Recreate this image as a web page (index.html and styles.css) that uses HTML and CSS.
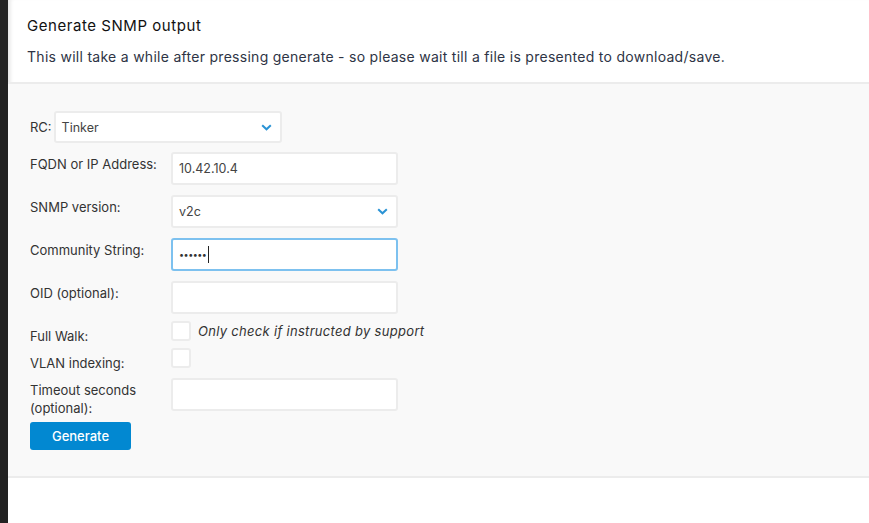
FILE: index.html
```html
<!DOCTYPE html>
<html>
<head>
<meta charset="utf-8">
<link rel="stylesheet" href="styles.css">
</head>
<body>
<div class="app">
  <div class="sidebar"></div>
  <div class="main">
    <div class="header">
      <h1 class="title">Generate SNMP output</h1>
      <p class="subtitle">This will take a while after pressing generate - so please wait till a file is presented to download/save.</p>
    </div>
    <form class="form">
      <div class="rc-row">
        <label class="rc-label">RC:</label>
        <div class="select rc-select"><span>Tinker</span>
          <svg class="chev" width="11" height="7" viewBox="0 0 11 7"><path d="M1.2 1.2 L5.5 5.3 L9.8 1.2" fill="none" stroke="#2a93d5" stroke-width="2"/></svg>
        </div>
      </div>
      <div class="grid">
        <label class="lbl">FQDN or IP Address:</label>
        <div class="input"><span>10.42.10.4</span></div>

        <label class="lbl">SNMP version:</label>
        <div class="select"><span>v2c</span>
          <svg class="chev" width="11" height="7" viewBox="0 0 11 7"><path d="M1.2 1.2 L5.5 5.3 L9.8 1.2" fill="none" stroke="#2a93d5" stroke-width="2"/></svg>
        </div>

        <label class="lbl">Community String:</label>
        <div class="input focus"><span class="dots">••••••</span><span class="caret"></span></div>

        <label class="lbl">OID (optional):</label>
        <div class="input before-check"></div>

        <label class="lbl lbl-check">Full Walk:</label>
        <div class="check-line"><span class="checkbox"></span><em class="hint">Only check if instructed by support</em></div>

        <label class="lbl lbl-check">VLAN indexing:</label>
        <div class="check-line last-check"><span class="checkbox"></span></div>

        <label class="lbl">Timeout seconds (optional):</label>
        <div class="input last"></div>
      </div>
      <button type="button" class="btn">Generate</button>
    </form>
    <div class="footer"></div>
  </div>
</div>
</body>
</html>
```
FILE: styles.css
```css
html, body {
  margin: 0;
  padding: 0;
  height: 100%;
  background: #fff;
  font-family: Inter, "Open Sans", sans-serif;
  color: #333;
}
.app {
  display: flex;
  min-height: 100%;
}
.sidebar {
  width: 8px;
  background: #222222;
  flex: none;
}
.main {
  flex: 1;
  box-shadow: inset 5px 0 4px -3px rgba(0,0,0,0.12);
  display: flex;
  flex-direction: column;
}
.header {
  height: 84px;
  box-sizing: border-box;
  padding: 17px 19px 0;
  border-bottom: 2px solid #ececec;
}
.title {
  margin: 0;
  font-size: 15px;
  font-weight: 400;
  color: #111;
  line-height: 18px;
  letter-spacing: 0.55px;
}
.subtitle {
  margin: 13px 0 0;
  font-size: 14px;
  line-height: 18px;
  letter-spacing: 0.28px;
  color: #2e3445;
}
.form {
  background: #f9f9f9;
  padding: 27px 22px 26px;
  border-bottom: 2px solid #ececec;
  font-size: 13px;
}
.rc-row {
  display: flex;
  align-items: center;
  gap: 2px;
  margin-bottom: 9px;
}
.rc-label {
  line-height: 18px;
}
.select, .input {
  box-sizing: border-box;
  height: 33px;
  background: #fff;
  border: 2px solid #ececec;
  border-radius: 3px;
  display: flex;
  align-items: center;
  padding: 0 6px;
  font-size: 12.5px;
  color: #444;
}
.grid .select, .grid .input {
  margin-bottom: 10px;
}
.grid .input.before-check {
  margin-bottom: 7px;
}
.grid .input.last {
  margin-bottom: 0;
}
.select {
  justify-content: space-between;
  padding-right: 8px;
}
.rc-select {
  width: 228px;
  height: 32px;
}
.chev {
  display: block;
}
.grid {
  display: grid;
  grid-template-columns: 141px 227px;
  align-items: start;
}
.lbl {
  padding-top: 3px;
  line-height: 18px;
  margin-bottom: -30px;
  color: #333;
}
.lbl-check {
  padding-top: 6px;
}
.input.focus {
  border-color: #7dc1ef;
}
.dots {
  font-size: 9px;
  letter-spacing: -0.5px;
  color: #333;
}
.caret {
  display: inline-block;
  width: 1px;
  height: 17px;
  background: #222;
  margin-left: 2px;
}
.check-line {
  display: flex;
  align-items: center;
  gap: 7px;
  height: 20px;
  white-space: nowrap;
  margin-bottom: 7px;
}
.check-line.last-check {
  margin-bottom: 10px;
}
.checkbox {
  box-sizing: border-box;
  width: 20px;
  height: 20px;
  background: #fff;
  border: 2px solid #ececec;
  border-radius: 3px;
  flex: none;
}
.hint {
  font-style: italic;
  color: #333;
  font-size: 13px;
  letter-spacing: 0.3px;
}
.btn {
  margin-top: 11px;
  width: 101px;
  height: 28px;
  background: #0288d1;
  color: #fff;
  border: none;
  border-radius: 3px;
  font-family: inherit;
  font-size: 13px;
  font-weight: 500;
  padding: 0;
  display: block;
}
.footer {
  flex: 1;
  background: #fff;
}
```
